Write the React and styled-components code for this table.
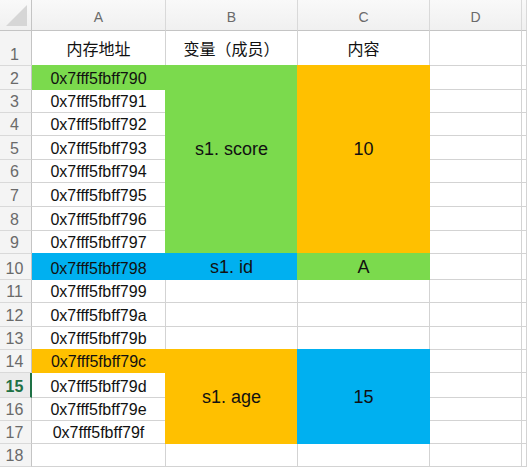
import React from 'react';
import styled, { createGlobalStyle } from 'styled-components';

const GlobalStyle = createGlobalStyle`
  html, body {
    margin: 0;
    padding: 0;
    background: #ffffff;
  }
  body {
    font-family: "Liberation Sans", "Noto Sans CJK SC", sans-serif;
    overflow: hidden;
  }
`;

const GRID = '#d3d3d3';
const HEAD_LINE = '#c4c4c4';

const GREEN = '#7bda4d';
const ORANGE = '#ffc000';
const BLUE = '#00b0f0';

const Sheet = styled.div`
  display: grid;
  grid-template-columns: 32px 134px 132px 132px 92px 1fr;
  grid-template-rows: ${props => props.$rows};
  width: 527px;
`;

const Corner = styled.div`
  background: linear-gradient(#f9f9f9, #f0f0f0);
  border-right: 1px solid ${HEAD_LINE};
  border-bottom: 1px solid ${HEAD_LINE};
  display: flex;
  align-items: flex-start;
  justify-content: flex-start;
`;

const ColHead = styled.div`
  background: linear-gradient(#f9f9f9, #f0f0f0);
  border-right: 1px solid #d9d9d9;
  border-bottom: 1px solid ${HEAD_LINE};
  color: #6a6a6a;
  font-size: 14px;
  display: flex;
  align-items: center;
  justify-content: center;
  padding-top: 3px;
  box-sizing: border-box;
`;

const RowHead = styled.div`
  background: ${props => (props.$active ? '#ebebeb' : '#f4f4f4')};
  border-right: ${props => (props.$active ? '2px solid #1e7145' : `1px solid ${HEAD_LINE}`)};
  border-bottom: 1px solid #d9d9d9;
  color: ${props => (props.$active ? '#1e7145' : '#6a6a6a')};
  font-weight: ${props => (props.$active ? 700 : 400)};
  font-size: 16px;
  line-height: 1;
  display: flex;
  align-items: flex-end;
  justify-content: center;
  padding: 0 ${props => (props.$active ? '1px' : '2px')} 2px 0;
  box-sizing: border-box;
`;

const Cell = styled.div`
  grid-row: ${props => (props.$span ? `span ${props.$span}` : 'auto')};
  background: ${props => props.$fill || '#ffffff'};
  border-right: 1px solid ${props => props.$fill || GRID};
  border-bottom: 1px solid ${props => props.$fill || GRID};
  color: #111;
  font-size: ${props => (props.$big ? '18px' : '16px')};
  line-height: 1;
  display: flex;
  justify-content: center;
  align-items: ${props => props.$align || 'flex-end'};
  padding-bottom: ${props => props.$lift || 0}px;
  padding-top: ${props => props.$drop || 0}px;
  box-sizing: border-box;
  white-space: nowrap;
  min-width: 0;
  overflow: visible;

  ${props => props.$fill && `
    position: relative;
    box-shadow: ${props.$first
      ? `0 -1px 0 0 ${props.$fill}`
      : `-1px 0 0 0 ${props.$fill}, 0 -1px 0 0 ${props.$fill}, -1px -1px 0 0 ${props.$fill}`};
  `}
`;

const CellText = styled.span`
  display: block;
  padding-bottom: ${props => (props.$big ? 0 : 2)}px;
`;

const rowHeights = [31, 35, 24, 23, 23, 24, 23, 24, 24, 23, 26, 23, 24, 23, 23, 25, 23, 23, 23];

const addr = (n) => '0x7fff5fbff7' + (0x90 + n - 2).toString(16);

const addrFill = { 2: GREEN, 10: BLUE, 14: ORANGE };

const buildRow = (n) => {
  const cells = [];
  if (n === 1) {
    cells.push({ text: '内存地址', align: 'center', drop: 5 });
    cells.push({ text: '变量（成员）', align: 'center', drop: 5 });
    cells.push({ text: '内容', align: 'center', drop: 5 });
  } else {
    if (n <= 17) {
      cells.push({ text: addr(n), fill: addrFill[n], first: true });
    } else {
      cells.push({ first: true });
    }
    if (n === 2) {
      cells.push({ text: 's1. score', span: 8, fill: GREEN, big: true, align: 'center', lift: 22 });
      cells.push({ text: '10', span: 8, fill: ORANGE, big: true, align: 'center', lift: 22 });
    } else if (n === 10) {
      cells.push({ text: 's1. id', fill: BLUE, big: true, align: 'center' });
      cells.push({ text: 'A', fill: GREEN, big: true, align: 'center' });
    } else if (n === 14) {
      cells.push({ text: 's1. age', span: 4, fill: ORANGE, big: true, align: 'center' });
      cells.push({ text: '15', span: 4, fill: BLUE, big: true, align: 'center' });
    } else if (n >= 11 && n <= 13 || n === 18) {
      cells.push({});
      cells.push({});
    }
  }
  cells.push({});
  cells.push({});
  return cells;
};

const CornerMark = () => (
  <svg width="31" height="30" viewBox="0 0 31 30">
    <polygon points="27,5 27,26 6,26" fill="#d6d6d6" />
  </svg>
);

const App = () => {
  const rowNums = Array.from({ length: 18 }, (_, i) => i + 1);
  return (
    <>
      <GlobalStyle />
      <Sheet $rows={rowHeights.map(h => `${h}px`).join(' ')}>
        <Corner>
          <CornerMark />
        </Corner>
        {['A', 'B', 'C', 'D', ''].map((letter, i) => (
          <ColHead key={i}>{letter}</ColHead>
        ))}
        {rowNums.map(n => (
          <React.Fragment key={n}>
            <RowHead $active={n === 15}>{n}</RowHead>
            {buildRow(n).map((c, i) => (
              <Cell
                key={i}
                $span={c.span}
                $fill={c.fill}
                $first={c.first}
                $big={c.big}
                $align={c.align}
                $lift={c.lift}
                $drop={c.drop}
              >
                {c.text && <CellText $big={c.big}>{c.text}</CellText>}
              </Cell>
            ))}
          </React.Fragment>
        ))}
      </Sheet>
    </>
  );
};

export default App;
